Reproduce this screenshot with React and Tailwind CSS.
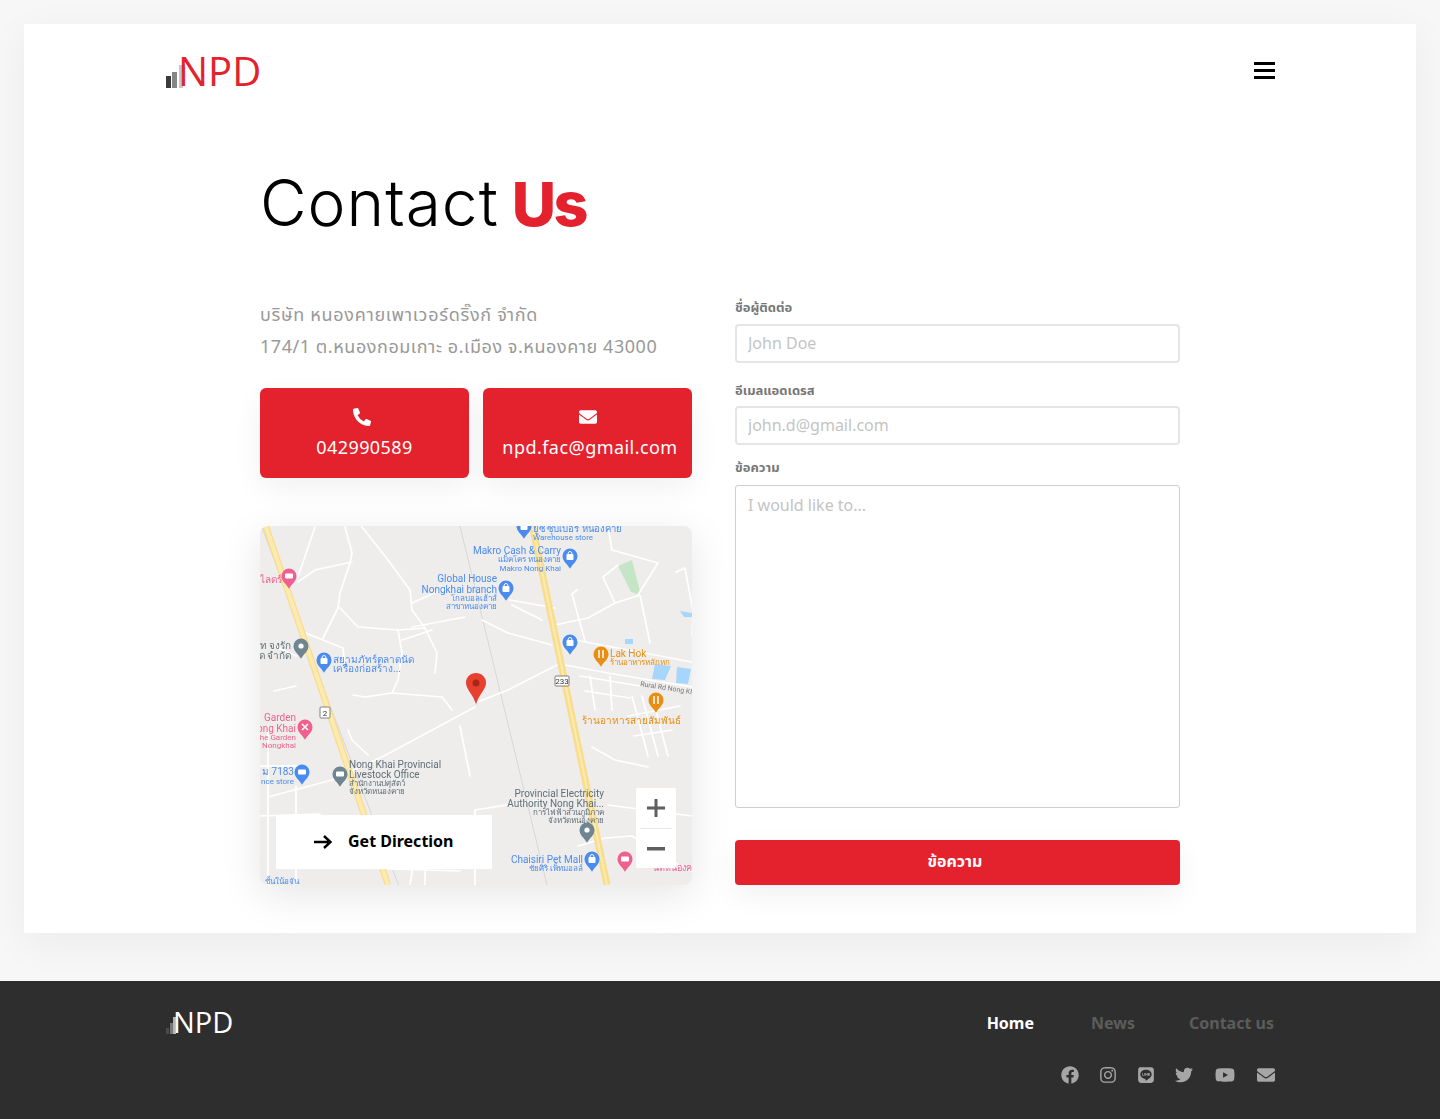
import React from 'react';
import { FaPhoneAlt, FaEnvelope, FaFacebook, FaInstagram, FaLine, FaTwitter, FaYoutube } from 'react-icons/fa';

const roads = [
  '85,1 92,27 90,37 80,67 78,82 63,112',
  '80,82 98,101 138,104 165,102 177,127 175,147',
  '102,1 128,34 150,64 152,84 165,102',
  '92,36 55,44 38,56',
  '55,1 38,51',
  '43,106 83,122 85,141',
  '138,104 142,127 138,154 132,167 105,171 93,169',
  '132,167 182,171 192,184',
  '152,101 205,91',
  '142,114 172,104',
  '152,77 188,61',
  '295,99 328,92 355,77 380,69 390,117',
  '355,77 343,51 358,39',
  '305,139 348,147 432,161',
  '315,114 432,136',
  '297,139 248,164 215,177',
  '250,74 295,82',
  '252,79 282,94',
  '248,107 292,119',
  '222,94 248,107',
  '416,46 425,42 433,85 432,110',
  '348,1 352,24 398,37 378,69',
  '317,64 312,68 325,115',
  '332,221 355,234 388,241',
  '348,279 432,290',
  '215,181 148,217 122,231 72,254 8,271',
  '88,204 92,214 108,229',
  '215,284 280,274',
  '36,260 36,359',
  '8,200 8,359',
  '0,240 40,240',
  '0,290 60,288',
  '30,340 200,345',
  '150,359 153,340',
  '90,330 150,329',
  '372,170 388,230',
  '382,170 398,230',
  '392,170 408,230',
  '368,190 420,180',
  '374,210 412,204',
  '320,150 380,160',
  '325,165 370,172',
  '330,150 335,184',
  '350,150 352,184',
  '318,320 345,312 372,310 420,340 432,345',
  '215,284 215,359',
  '15,120 36,130',
  '14,165 36,160',
  '165,335 165,359',
  '200,200 210,250',
];

const Pin = ({ x, y, fill, kind, r = 7.5 }) => {
  const cy = y - r * 1.6;
  return (
    <g>
      <path d={`M${x - r} ${cy} a${r} ${r} 0 1 1 ${r * 2} 0 c0 ${r * 0.7} -${r * 0.6} ${r} -${r} ${r * 1.7} c-${r * 0.4} -${r * 0.7} -${r} -${r} -${r} -${r * 1.7}z`} fill={fill} />
      {kind === 'bag' && (
        <g>
          <rect x={x - 3.5} y={cy - 2} width="7" height="6" rx="1" fill="white" />
          <path d={`M${x - 2} ${cy - 2} a2 2.5 0 0 1 4 0`} stroke="white" strokeWidth="1" fill="none" />
        </g>
      )}
      {kind === 'dot' && <circle cx={x} cy={cy} r="2.6" fill="white" />}
      {kind === 'bed' && <rect x={x - 4} y={cy - 2.5} width="8" height="5" rx="1" fill="white" />}
      {kind === 'fork' && <path d={`M${x - 2} ${cy - 4} v8 M${x + 2} ${cy - 4} v8`} stroke="white" strokeWidth="1.5" />}
      {kind === 'tools' && <path d={`M${x - 3} ${cy + 3} L${x + 3} ${cy - 3} M${x - 3} ${cy - 3} L${x + 3} ${cy + 3}`} stroke="white" strokeWidth="1.5" />}
    </g>
  );
};

const Label = ({ x, y, fill, size = 10, anchor = 'start', children }) => (
  <text x={x} y={y} fill={fill} fontSize={size} textAnchor={anchor} fontFamily="Roboto, 'Noto Sans', sans-serif">
    {children}
  </text>
);

const MapDrawing = () => {
  const blue = '#4a8bf0';
  const pink = '#ef5f90';
  const orange = '#e98e12';
  const slate = '#6f8592';
  return (
    <svg viewBox="0 0 432 359" className="block w-full h-full blur-[0.3px]">
      <rect width="432" height="359" fill="#eeedec" />
      <polygon points="358,40 372,34 381,69 371,66" fill="#c5e6c6" />
      <polygon points="420,85 432,87 432,91 424,91" fill="#a6d6fb" />
      <polygon points="365,113 373,113 373,118 365,118" fill="#a6d6fb" />
      <polygon points="395,138 411,140 405,154 392,153" fill="#a6d6fb" />
      <polygon points="417,141 431,143 428,158 416,157" fill="#a6d6fb" />
      <path d="M-10 -30 L150 389 M200 0 L287 359" stroke="#d8d7d6" strokeWidth="1" fill="none" />
      <g stroke="#ffffff" strokeWidth="1.7" fill="none" strokeLinejoin="round" strokeLinecap="round">
        {roads.map((r) => <polyline key={r} points={r} />)}
      </g>
      <path d="M5 -2 L128 359" stroke="#f8dd8c" strokeWidth="6.5" fill="none" />
      <path d="M5 -2 L128 359" stroke="#fdeab0" strokeWidth="4" fill="none" />
      <path d="M272 -2 L347 359" stroke="#f8dd8c" strokeWidth="7" fill="none" />
      <path d="M272 -2 L347 359" stroke="#fdeab0" strokeWidth="2" fill="none" />

      <rect x="60" y="181" width="10" height="11" rx="1" fill="white" stroke="#666" strokeWidth="0.8" />
      <text x="65" y="190" fontSize="8" fill="#333" textAnchor="middle" fontFamily="Roboto, sans-serif">2</text>
      <rect x="295" y="150" width="14" height="10" rx="1" fill="white" stroke="#666" strokeWidth="0.8" />
      <text x="302" y="158" fontSize="8" fill="#333" textAnchor="middle" fontFamily="Roboto, sans-serif">233</text>

      <Label x={273} y={6} fill={blue} size={9.5}>ยูซี ซุปเปอร์ หนองคาย</Label>
      <Label x={273} y={14} fill={blue} size={8}>Warehouse store</Label>
      <Pin x={264} y={12} fill={blue} kind="bag" />
      <Label x={301} y={28} fill={blue} anchor="end">Makro Cash &amp; Carry</Label>
      <Label x={301} y={36} fill={blue} size={8} anchor="end">แม็คโคร หนองคาย</Label>
      <Label x={301} y={45} fill={blue} size={8} anchor="end">Makro Nong Khai</Label>
      <Pin x={310} y={42} fill={blue} kind="bag" />
      <Label x={237} y={56} fill={blue} anchor="end">Global House</Label>
      <Label x={237} y={67} fill={blue} anchor="end">Nongkhai branch</Label>
      <Label x={237} y={75} fill={blue} size={8} anchor="end">โกลบอลเฮ้าส์</Label>
      <Label x={237} y={83} fill={blue} size={8} anchor="end">สาขาหนองคาย</Label>
      <Pin x={246} y={74} fill={blue} kind="bag" />
      <Pin x={310} y={128} fill={blue} kind="bag" />
      <Label x={350} y={131} fill={orange}>Lak Hok</Label>
      <Label x={350} y={139} fill={orange} size={8}>ร้านอาหารหลักหก</Label>
      <Pin x={341} y={140} fill={orange} kind="fork" />
      <Pin x={396} y={186} fill={orange} kind="fork" />
      <Label x={322} y={198} fill={orange}>ร้านอาหารสายสัมพันธ์</Label>
      <text x="380" y="160" fontSize="7" fill="#777" fontFamily="Roboto, sans-serif" transform="rotate(9 380 160)">Rural Rd Nong Kha</text>
      <Label x={0} y={57} fill={pink}>ไลดร์</Label>
      <Pin x={29} y={62} fill={pink} kind="bed" />
      <Label x={31} y={123} fill="#5f6f78" anchor="end">ท จงรัก</Label>
      <Label x={31} y={133} fill="#5f6f78" anchor="end">ด จำกัด</Label>
      <Pin x={41} y={132} fill={slate} kind="dot" />
      <Pin x={64} y={146} fill={blue} kind="bag" />
      <Label x={73} y={137} fill={blue}>สยามภัทร์ตลาดนัด</Label>
      <Label x={73} y={146} fill={blue}>เครื่องก่อสร้าง...</Label>
      <Label x={36} y={195} fill={pink} anchor="end">Garden</Label>
      <Label x={36} y={206} fill={pink} anchor="end">ong Khai</Label>
      <Label x={36} y={214} fill={pink} size={8} anchor="end">he Garden</Label>
      <Label x={36} y={222} fill={pink} size={8} anchor="end">Nongkhai</Label>
      <Pin x={45} y={213} fill={pink} kind="tools" />
      <Label x={34} y={249} fill={blue} anchor="end">ม 7183</Label>
      <Label x={34} y={258} fill={blue} size={8} anchor="end">nce store</Label>
      <Pin x={42} y={258} fill={blue} kind="bed" />
      <Pin x={80} y={260} fill={slate} kind="bed" />
      <Label x={89} y={242} fill="#5f6f78">Nong Khai Provincial</Label>
      <Label x={89} y={252} fill="#5f6f78">Livestock Office</Label>
      <Label x={89} y={260} fill="#5f6f78" size={8}>สำนักงานปศุสัตว์</Label>
      <Label x={89} y={268} fill="#5f6f78" size={8}>จังหวัดหนองคาย</Label>
      <Label x={344} y={271} fill="#5f6f78" anchor="end">Provincial Electricity</Label>
      <Label x={344} y={281} fill="#5f6f78" anchor="end">Authority Nong Khai...</Label>
      <Label x={344} y={289} fill="#5f6f78" size={8} anchor="end">การไฟฟ้าส่วนภูมิภาค</Label>
      <Label x={344} y={297} fill="#5f6f78" size={8} anchor="end">จังหวัดหนองคาย</Label>
      <Pin x={327} y={316} fill={slate} kind="dot" />
      <Label x={323} y={337} fill={blue} anchor="end">Chaisiri Pet Mall</Label>
      <Label x={323} y={345} fill={blue} size={8} anchor="end">ชัยศิริ เพ็ทมอลล์</Label>
      <Pin x={332} y={345} fill={blue} kind="bag" />
      <Pin x={365} y={345} fill={pink} kind="bed" />
      <Label x={432} y={345} fill={pink} size={9} anchor="end">นท์หนองค</Label>
      <Label x={5} y={358} fill={blue} size={8}>ชั้นใน้อจัน</Label>

      <path d="M216 147 c-5.5 0 -10 4.2 -10 9.5 c0 7.5 7 11 10 22 c3 -11 10 -14.5 10 -22 c0 -5.3 -4.5 -9.5 -10 -9.5z" fill="#e8402f" />
      <circle cx="216" cy="157" r="3.5" fill="#a52714" />
    </svg>
  );
};

const Logo = ({ light }) => (
  light ? (
    <div className="flex items-end h-[30px]">
      <svg width="20" height="22" viewBox="0 0 20 22" className="mb-[1px] -mr-[13px]">
        <rect x="0" y="13" width="3" height="6" fill="#4a4a4a" />
        <rect x="4" y="8" width="3" height="11" fill="#777777" />
        <rect x="7" y="2" width="3" height="17" fill="#b5b5b5" />
      </svg>
      <span className="text-[29px] leading-[38px] -mb-[3px] font-normal text-white font-['Open_Sans']">NPD</span>
    </div>
  ) : (
    <div className="flex items-end h-[33px]">
      <svg width="18" height="24" viewBox="0 0 18 24" className="-mr-[5px] shrink-0">
        <rect x="0" y="12" width="5" height="12" fill="#3a3a3a" />
        <rect x="6" y="8" width="5" height="16" fill="#868686" />
        <rect x="13" y="1" width="4" height="23" fill="#c8c8c8" />
      </svg>
      <span className="text-[40px] leading-[46px] -mb-[6px] -ml-[1px] font-normal text-[#e4222e] font-['Open_Sans']">NPD</span>
    </div>
  )
);

const inputClass = "block w-full h-[39px] rounded-[4px] border-2 border-[#e5e5e5] px-[11px] pb-[2px] text-[16px] text-[#555] placeholder:text-[#c4c4c4] outline-none bg-white";

const App = () => {
  return (
    <div className="min-h-[1119px] bg-[#f7f7f7] font-['Noto_Sans','Noto_Sans_Thai',sans-serif]">
      <div className="pt-6 px-6 pb-12">
        <div className="bg-white h-[909px] px-[142px] pt-[31px] shadow-[0_10px_40px_rgba(0,0,0,0.05)]">
          <div className="flex justify-between items-start">
            <Logo />
            <div className="w-[21px] mt-[7px] mr-[-1px] flex flex-col gap-[4px]">
              <div className="h-[3px] bg-black" />
              <div className="h-[3px] bg-black" />
              <div className="h-[3px] bg-black" />
            </div>
          </div>

          <div className="w-[920px] ml-[94px]">
            <h1 className="mt-[75px] h-[80px] text-[64px] leading-[80px] font-['Inter'] font-light tracking-[1px] text-black">
              Contact <span className="-ml-[6px] text-[61px] font-extrabold tracking-[-2.5px] text-[#e4222e]">Us</span>
            </h1>

            <div className="flex gap-[43px] mt-[51px]">
              <div className="w-[432px]">
                <p className="mt-[4px] text-[18px] leading-[32px] tracking-[0.7px] text-[#999]">บริษัท หนองคายเพาเวอร์ดริ๊งก์ จำกัด</p>
                <p className="text-[18px] leading-[32px] tracking-[0.55px] text-[#999]">174/1 ต.หนองกอมเกาะ อ.เมือง จ.หนองคาย 43000</p>

                <div className="flex gap-[14px] mt-[26px]">
                  <a className="flex-1 h-[90px] rounded-[6px] bg-[#e4222e] text-white flex flex-col items-center pt-[20px] shadow-[0_10px_30px_rgba(0,0,0,0.06)]">
                    <FaPhoneAlt className="text-[18px] mr-[6px]" />
                    <span className="mt-[7px] text-[18px] leading-[28px] tracking-[0.4px]">042990589</span>
                  </a>
                  <a className="flex-1 h-[90px] rounded-[6px] bg-[#e4222e] text-white flex flex-col items-center pt-[20px] shadow-[0_10px_30px_rgba(0,0,0,0.06)]">
                    <FaEnvelope className="text-[18px]" />
                    <span className="mt-[7px] text-[18px] leading-[28px] tracking-[0.45px] pl-[5px]">npd.fac@gmail.com</span>
                  </a>
                </div>

                <div className="relative mt-[48px] h-[359px] rounded-[8px] overflow-hidden shadow-[0_10px_40px_rgba(0,0,0,0.1)]">
                  <MapDrawing />
                  <div className="absolute left-[16px] top-[289px] w-[216px] h-[54px] bg-white flex items-center pl-[38px] gap-[16px] text-[16px] font-bold text-black">
                    <svg width="18" height="14" viewBox="0 0 18 14" fill="none" stroke="black" strokeWidth="2.4">
                      <path d="M0 7 H16 M10 1 L16.5 7 L10 13" />
                    </svg>
                    <span className="pb-[2px]">Get Direction</span>
                  </div>
                  <div className="absolute left-[376px] top-[262px] w-[40px] h-[80px] bg-white rounded-[2px] flex flex-col items-center">
                    <div className="h-[40px] flex items-center">
                      <svg width="18" height="18" viewBox="0 0 18 18" fill="#5f5f5f"><path d="M7.5 0h3v7.5H18v3h-7.5V18h-3v-7.5H0v-3h7.5z" /></svg>
                    </div>
                    <div className="w-[30px] h-px bg-[#e6e6e6]" />
                    <div className="h-[40px] flex items-center pt-[2px]">
                      <svg width="18" height="4" viewBox="0 0 18 4" fill="#5f5f5f"><rect width="18" height="3.5" /></svg>
                    </div>
                  </div>
                </div>
              </div>

              <div className="w-[445px]">
                <label className="block mt-[4px] text-[13px] leading-[18px] font-bold text-[#777]">ชื่อผู้ติดต่อ</label>
                <input className={`${inputClass} mt-[8px]`} placeholder="John Doe" />
                <label className="block mt-[18px] text-[13px] leading-[18px] font-bold text-[#777]">อีเมลแอดเดรส</label>
                <input className={`${inputClass} mt-[7px]`} placeholder="john.d@gmail.com" />
                <label className="block mt-[13px] text-[13px] leading-[18px] font-bold text-[#777]">ข้อความ</label>
                <textarea className="block w-full h-[323px] mt-[9px] rounded-[3px] border border-[#cfcfcf] px-[12px] py-[7px] text-[16px] text-[#555] placeholder:text-[#c4c4c4] outline-none resize-none" placeholder="I would like to..." />
                <button className="block w-full h-[45px] mt-[32px] pr-[5px] pb-[3px] rounded-[4px] bg-[#e4222e] text-white text-[16px] font-bold shadow-[0_10px_30px_rgba(0,0,0,0.06)]">ข้อความ</button>
              </div>
            </div>
          </div>
        </div>
      </div>

      <footer className="h-[138px] bg-[#2e2e2e] pl-[166px] pr-[165px] pt-[27px] flex justify-between items-start">
        <Logo light />
        <div className="flex flex-col items-end">
          <nav className="flex gap-[55px] mr-[1px] text-[16px] leading-[30px] font-bold text-[#5c5c5c]">
            <a className="text-white mr-[2px]">Home</a>
            <a className="-mr-[1px]">News</a>
            <a>Contact us</a>
          </nav>
          <div className="flex items-center gap-[20px] mt-[27px] text-[18px] text-[#a6a6a6]">
            <FaFacebook />
            <FaInstagram />
            <FaLine />
            <FaTwitter />
            <FaYoutube className="text-[20px] mx-[2px]" />
            <FaEnvelope />
          </div>
        </div>
      </footer>
    </div>
  );
};

export default App;
